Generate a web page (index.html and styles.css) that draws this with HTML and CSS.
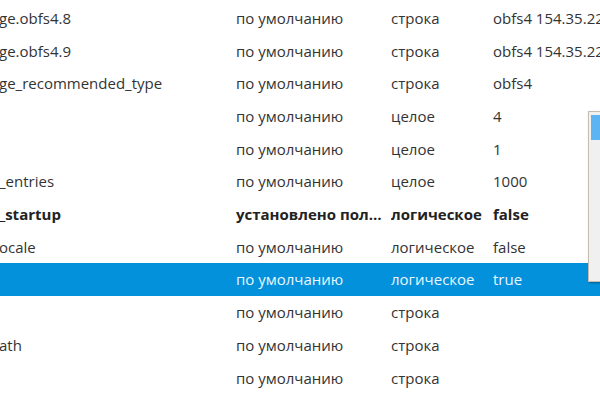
FILE: index.html
```html
<!DOCTYPE html>
<html lang="ru">
<head>
<meta charset="utf-8">
<link rel="stylesheet" href="styles.css">
</head>
<body>
<div class="table">
  <div class="row"><span class="name">ge.obfs4.8</span><span class="status">по умолчанию</span><span class="type">строка</span><span class="value">obfs4 154.35.22.10:15937 8FB9F4319E89E5C6223052AA525A192AFBC85D55</span></div>
  <div class="row"><span class="name">ge.obfs4.9</span><span class="status">по умолчанию</span><span class="type">строка</span><span class="value">obfs4 154.35.22.11:16488 A832D176ECD5C7C6B58825AE22FC4C90FA249637</span></div>
  <div class="row"><span class="name">ge_recommended_type</span><span class="status">по умолчанию</span><span class="type">строка</span><span class="value">obfs4</span></div>
  <div class="row"><span class="name"></span><span class="status">по умолчанию</span><span class="type">целое</span><span class="value">4</span></div>
  <div class="row"><span class="name"></span><span class="status">по умолчанию</span><span class="type">целое</span><span class="value">1</span></div>
  <div class="row"><span class="name">_entries</span><span class="status">по умолчанию</span><span class="type">целое</span><span class="value">1000</span></div>
  <div class="row modified"><span class="name">_startup</span><span class="status">установлено пользователем</span><span class="type">логическое</span><span class="value">false</span></div>
  <div class="row"><span class="name">ocale</span><span class="status">по умолчанию</span><span class="type">логическое</span><span class="value">false</span></div>
  <div class="row selected"><span class="name"></span><span class="status">по умолчанию</span><span class="type">логическое</span><span class="value">true</span></div>
  <div class="row"><span class="name"></span><span class="status">по умолчанию</span><span class="type">строка</span><span class="value"></span></div>
  <div class="row"><span class="name">ath</span><span class="status">по умолчанию</span><span class="type">строка</span><span class="value"></span></div>
  <div class="row"><span class="name"></span><span class="status">по умолчанию</span><span class="type">строка</span><span class="value"></span></div>
</div>
<div class="popup"><div class="popup-item"></div></div>
</body>
</html>
```
FILE: styles.css
```css
html, body {
  margin: 0;
  padding: 0;
  background: #ffffff;
  overflow: hidden;
  width: 600px;
  height: 400px;
}
body {
  font-family: "Open Sans", "Noto Sans", sans-serif;
  font-size: 15px;
  color: #333333;
  position: relative;
}
.table {
  padding-top: 1.6px;
}
.row {
  display: grid;
  grid-template-columns: 236px 155px 102px 1fr;
  height: 32.7px;
  align-items: center;
  white-space: nowrap;
}
.row > span {
  overflow: hidden;
  text-overflow: ellipsis;
  padding-right: 7px;
  line-height: 20px;
}
.name {
  margin-left: -1px;
}
.value {
  text-overflow: clip !important;
  padding-right: 0 !important;
}
.modified {
  font-weight: bold;
  color: #222222;
}
.selected {
  background: #0391dc;
  color: #eaf6fd;
}
.popup {
  position: absolute;
  left: 588px;
  top: 111px;
  width: 30px;
  height: 169px;
  background: #f0f0f0;
  border: 1px solid #c8bcb0;
  box-shadow: 1px 1px 2px rgba(0,0,0,0.35);
}
.popup-item {
  margin: 3px 0 0 2px;
  height: 25px;
  background: #5cb5f2;
}
```
